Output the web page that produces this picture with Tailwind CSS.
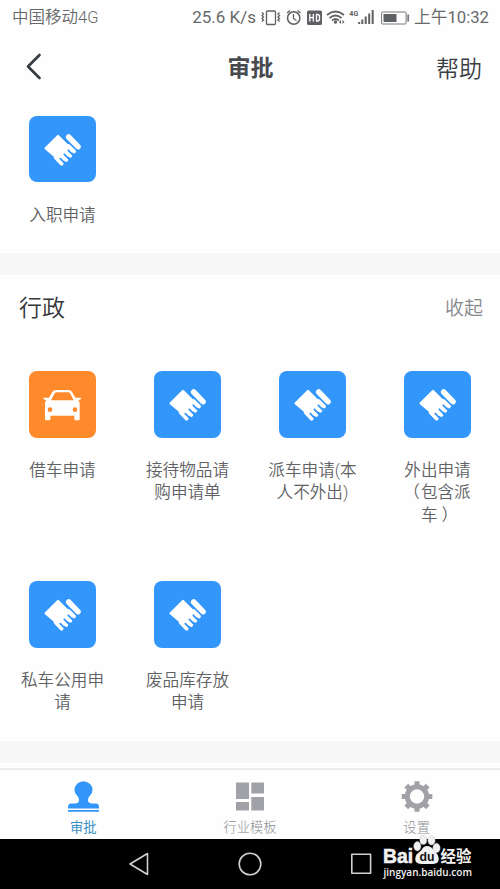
<!DOCTYPE html>
<html lang="zh-CN">
<head>
<meta charset="utf-8">
<title>审批</title>
<script src="https://cdn.jsdelivr.net/npm/@tailwindcss/browser@4"></script>
</head>
<body class="w-[500px] h-[889px] overflow-hidden bg-[#fefefe] font-['Roboto','Noto_Sans_CJK_SC',sans-serif] flex flex-col">
<svg class="hidden">
  <symbol id="hand" viewBox="0 0 200 200">
    <path d="M50 97L87 60L130 103L99 138Z" fill="#fff" stroke="#fff" stroke-width="7" stroke-linejoin="round"/>
    <path d="M80 124L98 143M98 118L112 132M109 104L124 119M118 90L135 106" stroke="#fff" stroke-width="11.500" stroke-linecap="round"/>
    <path d="M94 128L105 139M106 115L118 127M118 103L130 115" stroke="#3296fa" stroke-width="5.500" stroke-linecap="round"/>
    <path d="M119 63L147 92" stroke="#fff" stroke-width="16.500" stroke-linecap="round"/>
  </symbol>
</svg>

<div class="h-[36px] shrink-0 flex items-center justify-between pl-[12px] pr-[11px] text-[16.500px] text-[#68696b] font-[350]">
  <span class="whitespace-nowrap">中国移动4G</span>
  <div class="flex items-center">
    <span class="whitespace-nowrap text-[17px] font-normal">25.6 K/s</span>
    <svg class="w-[121px] h-[24px] ml-[4px]" viewBox="260 5.500 121 24" fill="none" stroke="#606164" stroke-width="1.300">
      <rect x="266.500" y="10.500" width="9" height="13.500" rx="1"/>
      <path d="M262 12l1.500 1.500-1.500 1.500 1.500 1.500-1.500 1.500 1.500 1.500-1.500 1.500M279.500 12l-1.500 1.500 1.500 1.500-1.500 1.500 1.500 1.500-1.500 1.500 1.500 1.500" />
      <circle cx="293.700" cy="17.500" r="6.200" stroke-width="1.500"/>
      <path d="M293.500 13.500v4.500l3 2M287 12.500l3-2.500M297.500 10l3 2.500"/>
      <rect x="307" y="10" width="15" height="14.500" rx="1.500" fill="#606164" stroke="none"/>
      <path d="M309.800 13.500v7.500M313.300 13.500v7.500M309.800 17.200h3.500M316.500 14v6.500h1q2 0 2-2v-2.500q0-2-2-2z" stroke="#fff"/>
      <path d="M327 14.500q8.500-7 17 0M329.500 17.500q6-5 12 0M332 20q3.500-3 7 0" stroke-width="1.700"/>
      <circle cx="335.500" cy="21.500" r="1.700" fill="#606164" stroke="none"/>
      <path d="M341 19.500l-2 2 2 2zM342.500 19.500l2 2-2 2z" fill="#606164" stroke="none"/>
      <text x="349.300" y="15.500" font-size="8" font-weight="700" fill="#606164" stroke="none" textLength="9" lengthAdjust="spacingAndGlyphs">4G</text>
      <path d="M359.200 21.500v2M362.300 19v4.500M365.700 16v7.500M369.200 13v10.500M372.700 9.500v14" stroke-width="2"/>
    </svg>
    <svg class="w-[29px] h-[14px]" viewBox="0 0 29 14"><rect x=".6" y="1" width="24.500" height="12" rx="1" fill="#fff" stroke="#77787a"/><rect x="2.500" y="3" width="13" height="8" fill="#606164"/><path d="M27.200 3.500v7" stroke="#77787a" stroke-width="1.800"/></svg>
    <span class="whitespace-nowrap ml-[4px] text-[16.700px] font-normal">上午10:32</span>
  </div>
</div>

<header class="h-[64px] shrink-0 grid grid-cols-[100px_1fr_100px] items-center pl-[26px] pr-[18px] text-[#3d4349]">
  <svg class="w-[16px] h-[27px] -mt-[3px]" viewBox="0 0 16 27" fill="none" stroke="#363d44" stroke-width="2.700" stroke-linecap="round" stroke-linejoin="round"><path d="M13.500 2L2 13.500L13.500 25"/></svg>
  <h1 class="text-center text-[23px] font-bold text-[#474b50] -ml-[7px] pt-[3px]">审批</h1>
  <span class="text-right text-[23px] text-[#3a4046] font-[350] pt-[4px]">帮助</span>
</header>

<section class="h-[153px] shrink-0 pt-[15.500px] grid grid-cols-4 content-start text-center text-[16.600px] leading-[22.300px] text-[#606164] font-[350]">
  <div class="flex flex-col items-center"><svg class="w-[66.700px] h-[66.700px] rounded-[8px] bg-[#3296fa]"><use href="#hand"/></svg><p class="mt-[22.500px] whitespace-nowrap">入职申请</p></div>
</section>
<div class="h-[22px] shrink-0 bg-[#f7f7f7]"></div>

<section class="h-[466px] shrink-0">
  <div class="h-[64px] flex items-center justify-between pl-[19px] pr-[17px] pt-[4px]">
    <h2 class="text-[23px] text-[#34363a] font-[350] pt-[1px]">行政</h2>
    <span class="text-[19px] text-[#87888b] font-[350]">收起</span>
  </div>
  <div class="pt-[32px] grid grid-cols-4 grid-rows-[210px_150px] text-center text-[16.600px] leading-[22.300px] text-[#606164] font-[350]">
    <div class="flex flex-col items-center">
      <svg class="w-[66.700px] h-[66.700px] rounded-[8px] bg-[#ff8a2b]" viewBox="0 0 200 200">
        <path fill="#fff" fill-rule="evenodd" d="M43 80h17L70 63Q73 57 81 57h37q8 0 11 6l10 17h17q2 5-4 6l-4 1q4 5 4 11v47q0 3-3 3h-10q-3 0-3-3v-11H64v11q0 3-3 3H51q-3 0-3-3V98q0-6 4-11l-5-1q-5-1-4-6zM66 88h68L123 67q-2-3-6-3H83q-4 0-6 3z"/>
        <circle cx="63" cy="116" r="7" fill="#ff8a2b"/><circle cx="138" cy="116" r="7" fill="#ff8a2b"/>
      </svg>
      <p class="mt-[22.500px] whitespace-nowrap">借车申请</p></div>
    <div class="flex flex-col items-center"><svg class="w-[66.700px] h-[66.700px] rounded-[8px] bg-[#3296fa]"><use href="#hand"/></svg><p class="mt-[22.500px] whitespace-nowrap">接待物品请<br>购申请单</p></div>
    <div class="flex flex-col items-center"><svg class="w-[66.700px] h-[66.700px] rounded-[8px] bg-[#3296fa]"><use href="#hand"/></svg><p class="mt-[22.500px] whitespace-nowrap">派车申请(本<br>人不外出)</p></div>
    <div class="flex flex-col items-center"><svg class="w-[66.700px] h-[66.700px] rounded-[8px] bg-[#3296fa]"><use href="#hand"/></svg><p class="mt-[22.500px] whitespace-nowrap">外出申请<br><span class="relative -left-[1px]">（</span>包含派<br>车<span class="relative left-[4px]">）</span></p></div>
    <div class="flex flex-col items-center"><svg class="w-[66.700px] h-[66.700px] rounded-[8px] bg-[#3296fa]"><use href="#hand"/></svg><p class="mt-[22.500px] whitespace-nowrap">私车公用申<br>请</p></div>
    <div class="flex flex-col items-center"><svg class="w-[66.700px] h-[66.700px] rounded-[8px] bg-[#3296fa]"><use href="#hand"/></svg><p class="mt-[22.500px] whitespace-nowrap">废品库存放<br>申请</p></div>
  </div>
</section>
<div class="h-[22px] shrink-0 bg-[#f7f7f7]"></div>
<div class="h-[5px] shrink-0"></div>

<nav class="h-[71px] shrink-0 border-t-2 border-[#ececec] grid grid-cols-3 pt-[11px] text-center text-[13.300px] leading-[20px] text-[#9b9ca0] font-light">
  <div class="flex flex-col items-center">
    <svg class="w-[31px] h-[32px]" viewBox="0 0 31 32" fill="#3296fa"><path d="M11 19.500Q11 16.500 9 14.500Q6.500 12 6.500 9a9 8.700 0 0 1 18 0q0 3-2.500 5.500Q20 16.500 20 19.500Q20 22 24 22.500h4.500Q31 23 31 26v1.500H0V26q0-3 2.500-3.500H7Q11 22 11 19.500zM0 29h31v1.700H0z"/></svg>
    <span class="mt-[5px] text-[#3a8fc4] font-normal">审批</span>
  </div>
  <div class="flex flex-col items-center">
    <svg class="w-[28px] h-[32px]" viewBox="0 0 28 32" fill="#a1a2a8"><rect y="1.500" width="13" height="16.500" rx=".6"/><rect y="21" width="13" height="8.500" rx=".6"/><rect x="15.300" y="1.500" width="12.700" height="11" rx=".6"/><rect x="15.300" y="16" width="12.700" height="13.500" rx=".6"/></svg>
    <span class="mt-[5px] text-[#8d8e92]">行业模板</span>
  </div>
  <div class="flex flex-col items-center">
    <svg class="w-[32px] h-[32px]" viewBox="-16 -15.500 32 32" fill="none" stroke="#a1a2a8">
      <circle r="9.700" stroke-width="5"/>
      <path stroke-width="5.200" d="M0-15.300v5M0 15.300v-5M-15.300 0h5M15.300 0h-5M-10.800-10.800l3 3M10.800-10.800l-3 3M-10.800 10.800l3-3M10.800 10.800l-3-3"/>
    </svg>
    <span class="mt-[5px] text-[#8d8e92]">设置</span>
  </div>
</nav>

<footer class="h-[50px] shrink-0 bg-black relative">
  <svg class="w-[500px] h-[50px]" viewBox="0 0 500 50" fill="none" stroke="#d0d0d0" stroke-width="1.600" stroke-linejoin="round"><path d="M130 25L147.500 14.500V35.500Z"/><circle cx="250" cy="25" r="10.800"/><rect x="351.800" y="15.300" width="18.800" height="19"/></svg>
  <svg class="absolute left-[380px] top-[-6px] w-[100px] h-[52px]" viewBox="380 833 100 52" fill="#f1f1f1">
    <g font-family="'Liberation Sans',sans-serif" font-weight="700">
      <text x="383" y="863" font-size="20.500" textLength="30" lengthAdjust="spacingAndGlyphs" stroke="#f1f1f1" stroke-width=".6">Bai</text>
      <g stroke="#b5b5b5" stroke-width=".4"><ellipse cx="417.300" cy="846.300" rx="3.600" ry="4.700"/><ellipse cx="423.300" cy="840" rx="3.500" ry="4.600"/><ellipse cx="431.500" cy="840.500" rx="3.600" ry="4.600"/><ellipse cx="436.500" cy="848" rx="3.700" ry="4.700"/></g>
      <path d="M427 846q4 0 6.500 4l4 4.500q4 9-5 9.500h-11q-9-.5-5-9.500l5-4.500q2-4 5.500-4z"/>
      <text x="419.500" y="861" font-size="13" fill="#111" textLength="15" lengthAdjust="spacingAndGlyphs">du</text>
      <text x="440.500" y="862.300" font-size="15.500" font-family="'Noto Sans CJK SC',sans-serif" textLength="31" lengthAdjust="spacingAndGlyphs">经验</text>
    </g>
    <text x="383.500" y="875.500" font-size="11" font-family="'Open Sans','Noto Sans',sans-serif" font-weight="600" textLength="88.500" lengthAdjust="spacingAndGlyphs">jingyan.baidu.com</text>
  </svg>
</footer>
</body>
</html>
